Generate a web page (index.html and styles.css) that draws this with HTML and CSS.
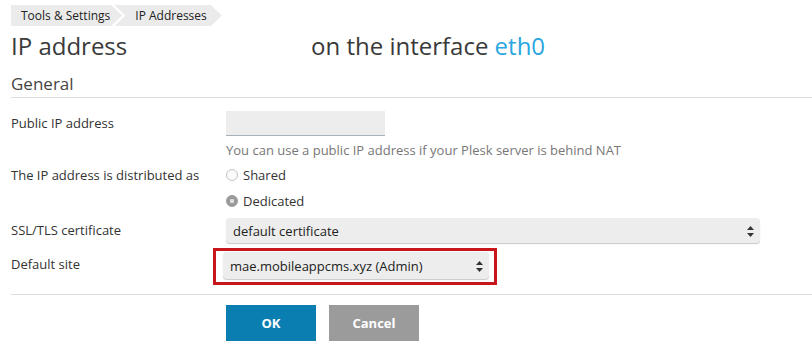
FILE: index.html
```html
<!DOCTYPE html>
<html lang="en">
<head>
  <meta charset="UTF-8">
  <meta name="viewport" content="width=device-width, initial-scale=1.0">
  <title>IP address</title>
  <link rel="stylesheet" href="styles.css">
</head>
<body>

  <div class="page">
    <!-- Breadcrumbs -->
    <div class="breadcrumbs">
      <span class="crumb first">Tools &amp; Settings</span>
      <span class="crumb">IP Addresses</span>
    </div>

    <h1 class="title"><span class="title-main">IP address</span>on the interface <span class="iface">eth0</span></h1>

    <h2 class="section">General</h2>

    <form class="form">
      <div class="row">
        <label class="label tall" for="publicIp">Public IP address</label>
        <div class="field">
          <input type="text" id="publicIp" class="text-input">
          <div class="hint">You can use a public IP address if your Plesk server is behind NAT</div>
        </div>
      </div>

      <div class="row">
        <div class="label">The IP address is distributed as</div>
        <div class="field radios">
          <label class="radio"><input type="radio" name="dist" value="shared" disabled> Shared</label>
          <label class="radio"><input type="radio" name="dist" value="dedicated" checked disabled> Dedicated</label>
        </div>
      </div>

      <div class="row">
        <label class="label tall" for="cert">SSL/TLS certificate</label>
        <div class="field">
          <span class="select wide">
            <select id="cert">
              <option>default certificate</option>
            </select>
            <svg class="arrows" width="7" height="11" viewBox="0 0 7 11"><path d="M3.5 0L7 4H0z M3.5 11L0 7h7z" fill="#333"/></svg>
          </span>
        </div>
      </div>

      <div class="row">
        <label class="label site" for="site">Default site</label>
        <div class="field">
          <span class="highlight">
            <span class="select narrow">
              <select id="site">
                <option>mae.mobileappcms.xyz (Admin)</option>
              </select>
              <svg class="arrows" width="7" height="11" viewBox="0 0 7 11"><path d="M3.5 0L7 4H0z M3.5 11L0 7h7z" fill="#333"/></svg>
            </span>
          </span>
        </div>
      </div>

      <div class="buttons">
        <button type="button" class="btn ok">OK</button>
        <button type="button" class="btn cancel">Cancel</button>
      </div>
    </form>
  </div>

</body>
</html>
```

FILE: styles.css
```css
/* General Styles */
body {
  margin: 0;
  font-family: 'Open Sans', 'DejaVu Sans', sans-serif;
  color: #333;
  background: #fff;
}

.page {
  padding: 5px 0 0 11px;
}

/* Breadcrumbs */
.breadcrumbs {
  display: flex;
  height: 21px;
}
.crumb {
  display: flex;
  align-items: center;
  background: #ebebeb;
  font-size: 12px;
  color: #222;
  padding: 0 15px 0 21px;
  margin-left: -8px;
  clip-path: polygon(0 0, calc(100% - 11px) 0, 100% 50%, calc(100% - 11px) 100%, 0 100%, 11px 50%);
}
.crumb.first {
  margin-left: 0;
  padding: 0 12px 0 10px;
  clip-path: polygon(0 0, calc(100% - 11px) 0, 100% 50%, calc(100% - 11px) 100%, 0 100%);
}

/* Title */
.title {
  margin: 5px 0 0;
  font-size: 24px;
  font-weight: normal;
  line-height: 30px;
  color: #3a3a3a;
}
.title-main {
  display: inline-block;
  width: 300px;
}
.iface {
  color: #2aa6e0;
}

.section {
  margin: 12px 0 0;
  padding-bottom: 2px;
  font-size: 17px;
  font-weight: normal;
  line-height: 22px;
  color: #444;
  border-bottom: 1px solid #dcdcdc;
}

/* Form */
.form {
  padding-top: 13px;
}
.row {
  display: flex;
  margin-bottom: 7px;
}
.label {
  width: 215px;
  flex: none;
  font-size: 13px;
  line-height: 18px;
}
.label.tall {
  line-height: 25px;
}
.label.site {
  padding-top: 5px;
}
.field {
  font-size: 13px;
}

.text-input {
  display: block;
  width: 159px;
  height: 25px;
  box-sizing: border-box;
  border: none;
  border-bottom: 1px solid #a9b2b8;
  background: #ededed;
  margin: 0;
}
.hint {
  margin-top: 5px;
  line-height: 18px;
  color: #777;
}

.radios {
  display: flex;
  flex-direction: column;
  gap: 8px;
  padding-bottom: 1px;
}
.radio {
  display: flex;
  align-items: center;
  gap: 3px;
  line-height: 18px;
}
.radio input {
  appearance: none;
  width: 12px;
  height: 12px;
  margin: 0 2px 0 0;
  border-radius: 50%;
  border: 1px solid #c4c4c4;
  background: #fafafa;
  box-sizing: border-box;
}
.radio input:checked {
  border-color: #999;
  background: radial-gradient(circle, #ddd 0 2px, #9a9a9a 2.5px);
}

/* Selects */
.select {
  position: relative;
  display: block;
}
.select select {
  appearance: none;
  display: block;
  border: none;
  border-radius: 4px;
  background: #ededed;
  box-shadow: 0 1px 1px #c8c8c8;
  font-family: inherit;
  font-size: 13px;
  color: #222;
  padding: 0 7px;
  margin: 0;
}
.select.wide select {
  width: 534px;
  height: 25px;
}
.select.narrow select {
  width: 266px;
  height: 27px;
}
.arrows {
  position: absolute;
  right: 6px;
  top: 50%;
  margin-top: -5px;
}

.highlight {
  display: inline-block;
  margin: -2px 0 0 -13px;
  padding: 1px 5px 3px 7px;
  border: 3px solid #c8161d;
}

/* Buttons */
.buttons {
  display: flex;
  gap: 13px;
  margin-top: 9px;
  border-top: 1px solid #dcdcdc;
  padding: 10px 0 0 215px;
}
.btn {
  width: 90px;
  height: 36px;
  border: none;
  color: #fff;
  font-family: inherit;
  font-size: 13px;
  font-weight: bold;
  cursor: pointer;
}
.btn.ok {
  background: #0a7db1;
}
.btn.cancel {
  background: #9b9b9b;
}
```
